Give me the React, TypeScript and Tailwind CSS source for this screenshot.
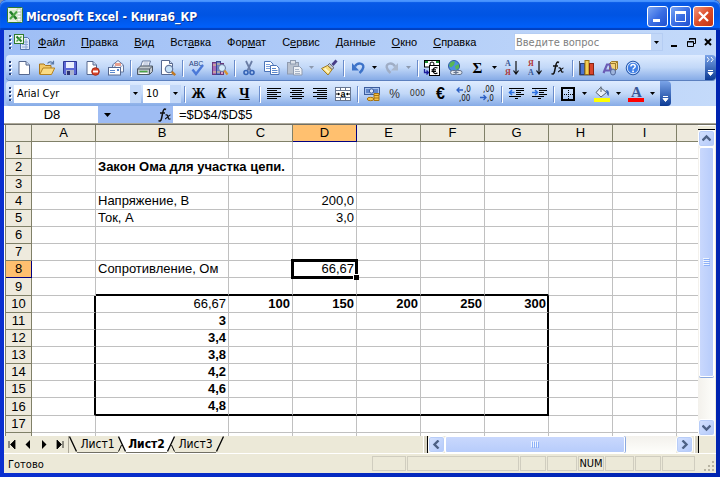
import { useState } from 'react';
import type { ReactNode } from 'react';
import clsx from 'clsx';

/* ---------- data ---------- */

interface CellData {
  text: string;
  bold?: boolean;
  align?: 'left' | 'right';
  span?: number;
}

const COLUMNS = ['A', 'B', 'C', 'D', 'E', 'F', 'G', 'H', 'I', 'J'];
const ROWS = Array.from({ length: 18 }, (_, i) => i + 1);

const CELLS: Record<string, CellData> = {
  B2: { text: 'Закон Ома для участка цепи.', bold: true, span: 2 },
  B4: { text: 'Напряжение, В' },
  D4: { text: '200,0', align: 'right' },
  B5: { text: 'Ток, А' },
  D5: { text: '3,0', align: 'right' },
  B8: { text: 'Сопротивление, Ом' },
  D8: { text: '66,67', align: 'right' },
  B10: { text: '66,67', align: 'right' },
  C10: { text: '100', bold: true, align: 'right' },
  D10: { text: '150', bold: true, align: 'right' },
  E10: { text: '200', bold: true, align: 'right' },
  F10: { text: '250', bold: true, align: 'right' },
  G10: { text: '300', bold: true, align: 'right' },
  B11: { text: '3', bold: true, align: 'right' },
  B12: { text: '3,4', bold: true, align: 'right' },
  B13: { text: '3,8', bold: true, align: 'right' },
  B14: { text: '4,2', bold: true, align: 'right' },
  B15: { text: '4,6', bold: true, align: 'right' },
  B16: { text: '4,8', bold: true, align: 'right' },
};

// [before, accelerator, after]
const MENU: [string, string, string][] = [
  ['', 'Ф', 'айл'],
  ['', 'П', 'равка'],
  ['', 'В', 'ид'],
  ['Вст', 'а', 'вка'],
  ['Фор', 'м', 'ат'],
  ['С', 'е', 'рвис'],
  ['', 'Д', 'анные'],
  ['', 'О', 'кно'],
  ['', 'С', 'правка'],
];

/* ---------- icons ---------- */

function Icon({ children }: { children: ReactNode }) {
  return (
    <svg width="16" height="16" viewBox="0 0 16 16" fill="none" className="overflow-visible" aria-hidden="true">
      {children}
    </svg>
  );
}

const ExcelIcon = () => (
  <Icon>
    <rect x="0.5" y="0.5" width="15" height="15" rx="1" fill="#e9f1e4" stroke="#2f7a2f" />
    <path d="M10 2h4v12h-4z" fill="#fff" stroke="#8fb08a" strokeWidth="0.6" />
    <path d="M10 5h4M10 8h4M10 11h4" stroke="#8fb08a" strokeWidth="0.8" />
    <rect x="2" y="3" width="9" height="10" fill="#d5ead0" />
    <path d="M3 4.5l6.5 7.5" stroke="#1f7a28" strokeWidth="2.6" />
    <path d="M10 4.5L3 12" stroke="#4aa544" strokeWidth="2" />
  </Icon>
);

const BookIcon = () => (
  <Icon>
    <path d="M6.5 3.5h7l2 2v10h-9z" fill="#dfe9fb" stroke="#5475ad" />
    <path d="M8 8h6M8 10.5h6M8 13h6M12 5v10" stroke="#8aa5d3" />
    <rect x="0.5" y="0.5" width="9" height="9" fill="#eef6ea" stroke="#2f7a2f" />
    <path d="M2.5 2.5l5 5" stroke="#1f7a28" strokeWidth="2" />
    <path d="M7.5 2.5l-5 5" stroke="#4aa544" strokeWidth="1.5" />
  </Icon>
);

const NewIcon = () => (
  <Icon>
    <path d="M3 1.5h7l3.5 3.5v9.5H3z" fill="#fff" stroke="#56688f" />
    <path d="M10 1.5V5h3.5" fill="#c8d6ee" stroke="#56688f" />
  </Icon>
);

const OpenIcon = () => (
  <Icon>
    <path d="M0.5 14V4h4.5l1.5 1.5H12V8" fill="#f3c968" stroke="#a8751c" />
    <path d="M0.8 14.5L4 8h11.7l-3.2 6.5z" fill="#fbdc85" stroke="#b5821f" />
    <path d="M8.5 3.5c1.5-2 4-2.300 5.500-.3M14.5 0.800v3h-3" stroke="#5b7aa8" strokeWidth="1.2" />
  </Icon>
);

const SaveIcon = () => (
  <Icon>
    <path d="M1.5 1.5h13v13h-12l-1-1z" fill="#5b68d6" stroke="#2d3795" />
    <rect x="4" y="2" width="8" height="6" fill="#e9eefc" />
    <rect x="4" y="10" width="8" height="5" fill="#a9b3cf" />
    <rect x="5" y="11" width="3" height="4" fill="#2b3270" />
  </Icon>
);

const PermissionIcon = () => (
  <Icon>
    <path d="M2 1.5h6l3.5 3.5v9.5H2z" fill="#fff" stroke="#56688f" />
    <path d="M8 1.5V5h3.5" fill="#c8d6ee" stroke="#56688f" />
    <circle cx="10.5" cy="11.5" r="3.8" fill="#d9452b" stroke="#a52a15" />
    <rect x="8" y="10.5" width="5" height="2" fill="#fff" />
  </Icon>
);

const MailIcon = () => (
  <Icon>
    <path d="M4.5 5L10 0.5 15.5 5v7h-11z" fill="#f6f8fd" stroke="#65789f" />
    <path d="M4.5 5l5.5 3.5L15.5 5" stroke="#9aaace" />
    <rect x="7" y="3" width="6" height="3" fill="#e9a08d" />
    <rect x="0.5" y="7.5" width="12" height="7.5" fill="#fff" stroke="#56688f" />
    <path d="M2 10.5h5M2 12.5h5" stroke="#5a87cc" />
    <rect x="9" y="9" width="2" height="2" fill="#5a87cc" />
  </Icon>
);

const PrintIcon = () => (
  <Icon>
    <path d="M5.5 1h8l-2 6h-8z" fill="#fff" stroke="#65789f" />
    <path d="M6.5 3h5M6 5h5" stroke="#9aaace" />
    <path d="M0.5 9l3-3h12v5.5l-3 3H0.5z" fill="#c3c9cf" stroke="#4d5865" />
    <path d="M0.5 9h12l3-3M12.5 9v5" stroke="#4d5865" />
    <path d="M2.5 11.5h8" stroke="#4aa544" strokeWidth="1.5" />
    <path d="M2.5 13.5h8" stroke="#fff" />
  </Icon>
);

const PreviewIcon = () => (
  <Icon>
    <path d="M1.5 0.5h8L12.5 3.5v11h-11z" fill="#fff" stroke="#56688f" />
    <path d="M9.5 0.5v3h3" fill="#c8d6ee" stroke="#56688f" />
    <circle cx="9" cy="9" r="3.7" fill="#c8e3f8" stroke="#65789f" strokeWidth="1.2" />
    <path d="M11.8 11.8l3.4 3.4" stroke="#c07822" strokeWidth="2.4" />
  </Icon>
);

const SpellingIcon = () => (
  <Icon>
    <text x="0" y="6" fontSize="7" fontFamily="Liberation Sans, sans-serif" fill="#27407c">ABC</text>
    <path d="M3.5 9.5l3.5 4.5L14 5" stroke="#4b79d8" strokeWidth="2.4" />
  </Icon>
);

const ResearchIcon = () => (
  <Icon>
    <rect x="0.5" y="2.5" width="4" height="12" fill="#a56bb8" stroke="#69397c" />
    <rect x="4.5" y="1.5" width="4" height="13" fill="#6d7fce" stroke="#37488f" />
    <path d="M1 5h3M1 12h3M5 4h3M5 12h3" stroke="#e7d08a" />
    <rect x="8.5" y="3.5" width="3" height="11" fill="#d5a1c9" stroke="#69397c" />
    <circle cx="10" cy="8" r="3.5" fill="#d3eafa" stroke="#65789f" />
    <path d="M12.5 10.5l3 4" stroke="#d8922e" strokeWidth="2.2" />
  </Icon>
);

const CutIcon = () => (
  <Icon>
    <path d="M5 1l4.5 9.5M11 1L6.5 10.5" stroke="#6a7da5" strokeWidth="1.8" />
    <circle cx="5" cy="12.5" r="2" stroke="#3563b5" strokeWidth="1.6" />
    <circle cx="11" cy="12.5" r="2" stroke="#3563b5" strokeWidth="1.6" />
  </Icon>
);

const CopyIcon = () => (
  <Icon>
    <path d="M0.5 1.5h6l2.5 2.5v7.5H0.5z" fill="#fff" stroke="#4b74b8" />
    <path d="M2 4.5h4M2 6.5h4M2 8.5h4" stroke="#7ba0dc" />
    <path d="M6.5 5.5h6l2.5 2.5v6.5H6.5z" fill="#fff" stroke="#4b74b8" />
    <path d="M8 8.5h4M8 10.5h5.5M8 12.5h5.5" stroke="#5a87cc" />
  </Icon>
);

const PasteIcon = () => (
  <Icon>
    <rect x="0.5" y="2.5" width="11" height="11.5" fill="#b9c1ce" stroke="#8f9bb0" />
    <rect x="3.5" y="0.5" width="5" height="3.5" fill="#dce1e9" stroke="#8f9bb0" />
    <path d="M6.5 6.5h6l2.5 2.5v6H6.5z" fill="#eef1f6" stroke="#8f9bb0" />
    <path d="M8 9.5h4M8 11.5h5M8 13.5h5" stroke="#a9b4c6" />
  </Icon>
);

const PainterIcon = () => (
  <Icon>
    <path d="M15.5 0.5L11.5 5" stroke="#473d86" strokeWidth="2.8" />
    <path d="M8.5 3.5l4.5 4.2-2 1.8-4.5-4z" fill="#c9ccd2" stroke="#65666e" />
    <path d="M6.5 5.5l4.5 4.2L7 15 0.5 8.5z" fill="#f6dc7c" stroke="#a07c26" />
    <path d="M3.5 8.5l4.5 4" stroke="#fff6c8" strokeWidth="1.8" />
  </Icon>
);

function UndoIcon({ muted, flip }: { muted?: boolean; flip?: boolean }) {
  return (
    <Icon>
      <g transform={flip ? 'translate(16 0) scale(-1 1)' : undefined}>
        <path
          d="M5 6.5c2.5-4.5 9-3.5 8.3.8-.3 2-1.8 4-3.8 5.7"
          stroke={muted ? '#9fadc5' : '#3d73c9'}
          strokeWidth="2.4"
        />
        <path d="M2 3v7.5h7z" fill={muted ? '#aab7cc' : '#3d73c9'} />
      </g>
    </Icon>
  );
}

const EuroConvertIcon = () => (
  <Icon>
    <rect x="0.5" y="0.5" width="15" height="6.5" fill="#fff" stroke="#000" />
    <path d="M1 1h3v2H1zM12 1h3v2h-3z" fill="#168a2c" />
    <circle cx="8" cy="4" r="2" stroke="#000" />
    <rect x="5.5" y="5.5" width="10" height="10" fill="#fff" stroke="#000" />
    <path d="M13.5 8c-2.5-1.3-4.5.2-4.5 2.6s2 3.7 4.5 2.4M7.5 9.8h4.5M7.5 11.5h4.5" stroke="#000" strokeWidth="1.2" />
    <path d="M0.5 9v3.5H4M2.5 10.5l2 2-2 2" stroke="#1c1c9c" strokeWidth="1.3" />
  </Icon>
);

const HyperlinkIcon = () => (
  <Icon>
    <circle cx="7" cy="6" r="5.5" fill="#4d8de0" stroke="#2c5ba5" />
    <path d="M3 3c2-2 4-2 5-1L7 5 4 7.5 2 6zM8 6l4-2v4l-3 2z" fill="#58b655" />
    <rect x="3.5" y="10.5" width="6.5" height="4" rx="2" fill="#e3e8ef" stroke="#66758f" />
    <rect x="8.5" y="10.5" width="6.5" height="4" rx="2" fill="#e3e8ef" stroke="#66758f" />
    <path d="M6.5 12.5h5" stroke="#66758f" strokeWidth="1.2" />
  </Icon>
);

function SortIcon({ top, bottom, topColor, bottomColor }: { top: string; bottom: string; topColor: string; bottomColor: string }) {
  return (
    <Icon>
      <g fontSize="8" fontWeight="bold" fontFamily="Liberation Serif, serif">
        <text x="1" y="6" fill={topColor}>{top}</text>
        <text x="1" y="15" fill={bottomColor}>{bottom}</text>
      </g>
      <path d="M12 1v12M9.5 10.5L12 14l2.5-3.5" stroke="#111" strokeWidth="1.2" />
    </Icon>
  );
}

const FunctionIcon = () => (
  <Icon>
    <path d="M9 2.5c-2-1.2-2.7.5-3.2 3L4.5 11.5c-.5 2.5-1.5 3-3 2.2M3 6h5" stroke="#111" strokeWidth="1.5" />
    <path d="M8.5 8c1.5-.5 2 0 2.5 2s1 2.5 2.5 1.8M13.5 8c-1.5-.3-4 4-5.5 3.800" stroke="#111" strokeWidth="1.2" />
  </Icon>
);

const ChartIcon = () => (
  <Icon>
    <path d="M0.5 1v14h15" stroke="#555" />
    <rect x="1.5" y="3.5" width="4" height="11" fill="#4b74d0" stroke="#27407c" />
    <rect x="6" y="0.5" width="4" height="14" fill="#f5cf55" stroke="#9c7413" />
    <rect x="10.5" y="3.5" width="4" height="11" fill="#d9452b" stroke="#8a2414" />
  </Icon>
);

const DrawingIcon = () => (
  <Icon>
    <path d="M7.5 3.5l2-2h6v7l-2 2h-6z" fill="#f2d27a" stroke="#9c7a2b" />
    <path d="M7.5 3.5h6v7M13.5 3.5l2-2" stroke="#9c7a2b" />
    <path d="M1.5 13L5 4.5h2.5L10 13M3 10.5h6" stroke="#6a5bb5" strokeWidth="2.2" />
    <ellipse cx="11" cy="12" rx="2.5" ry="3" fill="#9fb5dc" stroke="#52699c" />
  </Icon>
);

const HelpIcon = () => (
  <Icon>
    <circle cx="8" cy="8" r="6.8" fill="#3f7fe6" stroke="#2858a8" />
    <circle cx="8" cy="8" r="5.7" stroke="#d6e5fb" strokeWidth="1" />
    <path d="M5.9 6.5c0-2.6 4.3-2.6 4.3 0 0 1.5-2.2 1.5-2.2 3" stroke="#fff" strokeWidth="1.5" />
    <rect x="7.2" y="10.5" width="1.7" height="1.7" fill="#fff" />
  </Icon>
);

const AlignIcon = ({ side }: { side: 'left' | 'center' | 'right' }) => (
  <Icon>
    <path
      d={
        side === 'left'
          ? 'M1 2.5h14M1 4.5h10M1 6.5h14M1 8.5h10M1 10.5h14M1 12.5h10'
          : side === 'center'
            ? 'M1 2.5h14M3 4.5h10M1 6.5h14M3 8.5h10M1 10.5h14M3 12.5h10'
            : 'M1 2.5h14M5 4.5h10M1 6.5h14M5 8.5h10M1 10.5h14M5 12.5h10'
      }
      stroke="#000"
    />
  </Icon>
);

const MergeIcon = () => (
  <Icon>
    <rect x="0.5" y="1.5" width="15" height="13" fill="#fff" stroke="#66758f" />
    <path d="M0.5 4.5h15M0.5 11.5h15M5.5 1.5v3M10.5 1.5v3M5.5 11.5v3M10.5 11.5v3" stroke="#66758f" />
    <path d="M1 8h3.5M15 8h-3.5" stroke="#000" />
    <path d="M3 6.5L5 8 3 9.5zM13 6.5L11 8l2 1.5z" fill="#000" />
    <text x="5.5" y="10.5" fontSize="9" fontWeight="bold" fontFamily="Liberation Sans, sans-serif" fill="#000">a</text>
  </Icon>
);

const CurrencyIcon = () => (
  <Icon>
    <rect x="0.5" y="1.5" width="15" height="7" fill="#a9c3ee" stroke="#3b5c9c" />
    <rect x="2" y="3" width="12" height="4" fill="#6288cb" />
    <circle cx="7.5" cy="5" r="2.2" fill="#d8e5fa" stroke="#3b5c9c" />
    <path d="M10 7.5h5v7h-5z" fill="#f6c54b" stroke="#a87410" />
    <path d="M10 9.5h5M10 12h5" stroke="#a87410" />
    <ellipse cx="6.5" cy="13" rx="3.3" ry="1.7" fill="#f6c54b" stroke="#a87410" />
  </Icon>
);

function DecimalIcon({ add }: { add?: boolean }) {
  return (
    <Icon>
      <g fontSize="8" fontFamily="DejaVu Sans Condensed, sans-serif" fill="#111">
        <text x={add ? 8 : 4} y="6">{add ? ',0' : ',00'}</text>
        <text x={add ? 3 : 8} y="15">{add ? ',00' : ',0'}</text>
      </g>
      {add ? (
        <path d="M7 4H1M3.5 1.5L1 4l2.5 2.5" stroke="#2b5fc4" strokeWidth="1.3" />
      ) : (
        <path d="M1 11.5h6M4.5 9L7 11.5 4.5 14" stroke="#2b5fc4" strokeWidth="1.3" />
      )}
    </Icon>
  );
}

function IndentIcon({ increase }: { increase?: boolean }) {
  return (
    <Icon>
      <path d="M1 2.5h15M8 4.5h8M8 6.5h5M8 8.5h8M1 10.5h12M7 12.5h3" stroke="#000" />
      <path
        d={increase ? 'M1 6.5h5M4 4l2.5 2.5L4 9' : 'M6.5 6.5h-5M4 4L1.5 6.5 4 9'}
        stroke="#2b6fe0"
        strokeWidth="1.5"
      />
    </Icon>
  );
}

const BorderIcon = () => (
  <Icon>
    <rect x="2" y="2" width="12" height="12" stroke="#000" strokeWidth="2" />
    <path d="M8.5 4v9M4 8.5h9" stroke="#000" strokeDasharray="1 1" />
  </Icon>
);

const FillIcon = () => (
  <Icon>
    <path d="M6.5 1.5l6 5-5.5 4.5-5-4.5z" fill="#e8eef8" stroke="#55606f" />
    <path d="M7 6V0.5" stroke="#55606f" />
    <path d="M12 4c3 0 3.5 3 2.5 6-1.5-1-1.5-2.5-2-3.5z" fill="#3f66ad" />
    <rect x="0" y="12" width="16" height="4" fill="#ff0" />
  </Icon>
);

const FontColorIcon = () => (
  <Icon>
    <text x="3" y="11" fontSize="15" fontWeight="bold" fontFamily="Liberation Serif, serif" fill="#3a5795">A</text>
    <rect x="0" y="12" width="16" height="4" fill="#f00" />
  </Icon>
);

const Caret = ({ muted }: { muted?: boolean }) => (
  <svg width="5" height="3" viewBox="0 0 5 3" aria-hidden="true">
    <path d="M0 0h5L2.5 3z" fill={muted ? '#8c99ae' : '#000'} />
  </svg>
);

/* ---------- toolbar parts ---------- */

function ToolButton({ label, children }: { label: string; children: ReactNode }) {
  return (
    <button type="button" aria-label={label} className="flex h-6 w-[23px] shrink-0 items-center justify-center">
      {children}
    </button>
  );
}

function CaretButton({ label, muted }: { label: string; muted?: boolean }) {
  return (
    <button type="button" aria-label={label} className="flex h-6 w-[11px] shrink-0 items-center justify-center">
      <Caret muted={muted} />
    </button>
  );
}

const Separator = () => <span className="ml-[3px] mr-[2px] h-4 w-px shrink-0 bg-[#6a8ccb] shadow-[1px_1px_0_#fff]" />;

const Grip = () => (
  <svg width="3" height="14" viewBox="0 0 3 14" className="shrink-0" aria-hidden="true">
    <path d="M1 1h2v2H1zM1 5h2v2H1zM1 9h2v2H1zM1 13h2v1H1z" fill="#fff" />
    <path d="M0 0h2v2H0zM0 4h2v2H0zM0 8h2v2H0zM0 12h2v2H0z" fill="#27417c" />
  </svg>
);

function BarEnd({ chevrons }: { chevrons?: boolean }) {
  return (
    <button
      type="button"
      aria-label="Параметры панелей инструментов"
      className="flex h-full w-[11px] shrink-0 flex-col items-center justify-end gap-2 rounded-r bg-linear-to-b from-[#7ba4e8] to-[#0b3a94] pb-1"
    >
      {chevrons && (
        <svg width="7" height="5" viewBox="0 0 7 5" aria-hidden="true">
          <path d="M0 0l2 2.5L0 5M4 0l2 2.5L4 5" stroke="#fff" fill="none" />
        </svg>
      )}
      <svg width="7" height="6" viewBox="0 0 7 6" aria-hidden="true">
        <path d="M1 0.5h5M1 2.5h5L3.5 5.5z" stroke="#fff" fill="#fff" />
      </svg>
    </button>
  );
}

interface ComboProps {
  id: string;
  label: string;
  value: string;
  width: string;
}

function Combo({ id, label, value, width }: ComboProps) {
  return (
    <div className={clsx('relative h-[18px] shrink-0 bg-white', width)}>
      <label htmlFor={id} className="sr-only">{label}</label>
      <select
        id={id}
        defaultValue={value}
        className="block h-[18px] w-full appearance-none bg-transparent pl-[3px] leading-[18px] outline-none"
      >
        <option>{value}</option>
      </select>
      <span className="pointer-events-none absolute inset-y-0 right-0 flex w-[11px] items-center justify-center bg-[#c3d8f8]">
        <Caret />
      </span>
    </div>
  );
}

/* ---------- window parts ---------- */

function CaptionButton({ label, close, children }: { label: string; close?: boolean; children: ReactNode }) {
  return (
    <button
      type="button"
      aria-label={label}
      className={clsx(
        'flex size-[21px] items-center justify-center rounded-[3px] border border-white bg-linear-to-br',
        close ? 'from-[#f0937a] via-[#dd4c28] to-[#c23413]' : 'from-[#7ba5f3] via-[#3c6fe4] to-[#1f4fd0]',
      )}
    >
      <svg width="13" height="13" viewBox="0 0 13 13" fill="none" stroke="#fff" aria-hidden="true">
        {children}
      </svg>
    </button>
  );
}

function TitleBar() {
  return (
    <header className="flex h-[30px] shrink-0 items-center rounded-t-md bg-linear-to-b from-[#0a5be8] via-[#0054e3] to-[#0062ff] pl-[7px] pr-[6px] shadow-[inset_0_2px_1px_#4a95ff,inset_0_-2px_1px_#0040c0]">
      <ExcelIcon />
      <h1 className="ml-[3px] flex-1 pt-[3px] font-['DejaVu_Sans_Condensed',sans-serif] text-[12px] font-bold text-white [text-shadow:1px_1px_0_#0a2f8c]">
        Microsoft Excel - Книга6_КР
      </h1>
      <div className="flex gap-[2px] pt-[2px]">
        <CaptionButton label="Свернуть">
          <path d="M2 10.5h7" strokeWidth="3" />
        </CaptionButton>
        <CaptionButton label="Развернуть">
          <path d="M1 2.5h11" strokeWidth="3" />
          <path d="M1.5 3v8.5h10V3" />
        </CaptionButton>
        <CaptionButton label="Закрыть" close>
          <path d="M2 2l9 9M11 2l-9 9" strokeWidth="2.2" />
        </CaptionButton>
      </div>
    </header>
  );
}

function MenuBar() {
  return (
    <nav className="flex h-6 shrink-0 items-center pl-[5px]">
      <Grip />
      <span className="ml-[2px]">
        <BookIcon />
      </span>
      <div className="flex font-['Liberation_Sans',Arial,sans-serif]">
        {MENU.map(([before, key, after]) => (
          <button key={before + key + after} type="button" className="px-2 leading-4">
            {before}
            <span className="underline">{key}</span>
            {after}
          </button>
        ))}
      </div>
      <div className="ml-auto flex h-[18px] w-[149px] items-center border border-[#b5cdf3] bg-white">
        <input
          aria-label="Введите вопрос"
          placeholder="Введите вопрос"
          className="h-full min-w-0 flex-1 pl-px outline-none placeholder:text-[#808080]"
        />
        <button type="button" aria-label="Список вопросов" className="flex h-full w-[11px] items-center justify-center bg-[#c3d8f8]">
          <Caret />
        </button>
      </div>
      <div className="ml-[2px] flex">
        {[
          ['Свернуть окно', 'M3 10h6', 2],
          ['Восстановить окно', 'M4.5 4V2.5h6v5H9M2.5 5.5h6v5h-6zM4 3h7M2 6h7', 1],
          ['Закрыть окно', 'M3 3l6 6M9 3L3 9', 2],
        ].map(([label, d, w]) => (
          <button key={label} type="button" aria-label={String(label)} className="flex h-4 w-[17px] items-center justify-center">
            <svg width="12" height="12" viewBox="0 0 12 12" fill="none" stroke="#000" strokeWidth={w} aria-hidden="true">
              <path d={String(d)} />
            </svg>
          </button>
        ))}
      </div>
    </nav>
  );
}

function StandardBar() {
  return (
    <div className="ml-[2px] flex h-[25px] shrink-0 items-center rounded bg-linear-to-b from-[#dfecff] via-[#c2d8f8] to-[#86abe6] pl-[3px] shadow-[0_1px_0_#5c80bf]">
      <Grip />
      <div className="flex flex-1 items-center">
        <ToolButton label="Создать"><NewIcon /></ToolButton>
        <ToolButton label="Открыть"><OpenIcon /></ToolButton>
        <ToolButton label="Сохранить"><SaveIcon /></ToolButton>
        <ToolButton label="Разрешения"><PermissionIcon /></ToolButton>
        <ToolButton label="Сообщение"><MailIcon /></ToolButton>
        <Separator />
        <ToolButton label="Печать"><PrintIcon /></ToolButton>
        <ToolButton label="Предварительный просмотр"><PreviewIcon /></ToolButton>
        <Separator />
        <ToolButton label="Орфография"><SpellingIcon /></ToolButton>
        <ToolButton label="Справочные материалы"><ResearchIcon /></ToolButton>
        <Separator />
        <ToolButton label="Вырезать"><CutIcon /></ToolButton>
        <ToolButton label="Копировать"><CopyIcon /></ToolButton>
        <ToolButton label="Вставить"><PasteIcon /></ToolButton>
        <CaretButton label="Варианты вставки" muted />
        <ToolButton label="Формат по образцу"><PainterIcon /></ToolButton>
        <Separator />
        <ToolButton label="Отменить"><UndoIcon /></ToolButton>
        <CaretButton label="Список отмены" />
        <ToolButton label="Вернуть"><UndoIcon muted flip /></ToolButton>
        <CaretButton label="Список возврата" muted />
        <Separator />
        <ToolButton label="Пересчет в евро"><EuroConvertIcon /></ToolButton>
        <ToolButton label="Гиперссылка"><HyperlinkIcon /></ToolButton>
        <ToolButton label="Автосумма">
          <span className="font-['Liberation_Serif',serif] text-[15px] font-bold leading-4">Σ</span>
        </ToolButton>
        <CaretButton label="Другие функции" />
        <ToolButton label="По возрастанию">
          <SortIcon top="А" bottom="Я" topColor="#3a5795" bottomColor="#b03a3a" />
        </ToolButton>
        <ToolButton label="По убыванию">
          <SortIcon top="Я" bottom="А" topColor="#b03a3a" bottomColor="#3a5795" />
        </ToolButton>
        <ToolButton label="Вставка функции"><FunctionIcon /></ToolButton>
        <Separator />
        <ToolButton label="Мастер диаграмм"><ChartIcon /></ToolButton>
        <ToolButton label="Рисование"><DrawingIcon /></ToolButton>
        <ToolButton label="Справка"><HelpIcon /></ToolButton>
      </div>
      <BarEnd chevrons />
    </div>
  );
}

function FormattingBar() {
  return (
    <div className="ml-[2px] mt-px flex h-[25px] w-max shrink-0 items-center rounded bg-linear-to-b from-[#dfecff] via-[#c2d8f8] to-[#86abe6] pl-[3px]">
      <Grip />
      <div className="ml-[2px] flex gap-[2px]">
        <Combo id="font-name" label="Шрифт" value="Arial Cyr" width="w-[127px]" />
        <Combo id="font-size" label="Размер" value="10" width="w-[38px]" />
      </div>
      <Separator />
      <div className="flex font-['Liberation_Serif',serif] text-[14px] font-bold">
        <ToolButton label="Полужирный">Ж</ToolButton>
        <ToolButton label="Курсив"><span className="italic">К</span></ToolButton>
        <ToolButton label="Подчеркнутый"><span className="underline">Ч</span></ToolButton>
      </div>
      <Separator />
      <ToolButton label="По левому краю"><AlignIcon side="left" /></ToolButton>
      <ToolButton label="По центру"><AlignIcon side="center" /></ToolButton>
      <ToolButton label="По правому краю"><AlignIcon side="right" /></ToolButton>
      <ToolButton label="Объединить и поместить в центре"><MergeIcon /></ToolButton>
      <Separator />
      <div className="flex font-['Liberation_Sans',Arial,sans-serif] text-[#333]">
        <ToolButton label="Денежный формат"><CurrencyIcon /></ToolButton>
        <ToolButton label="Процентный формат"><span className="text-[12px]">%</span></ToolButton>
        <ToolButton label="Формат с разделителями"><span className="font-['DejaVu_Sans_Condensed',sans-serif] text-[9px]">000</span></ToolButton>
        <ToolButton label="Евро"><span className="text-[16px] font-bold leading-4 text-black">€</span></ToolButton>
      </div>
      <ToolButton label="Увеличить разрядность"><DecimalIcon add /></ToolButton>
      <ToolButton label="Уменьшить разрядность"><DecimalIcon /></ToolButton>
      <Separator />
      <ToolButton label="Уменьшить отступ"><IndentIcon /></ToolButton>
      <ToolButton label="Увеличить отступ"><IndentIcon increase /></ToolButton>
      <Separator />
      <ToolButton label="Границы"><BorderIcon /></ToolButton>
      <CaretButton label="Виды границ" />
      <ToolButton label="Цвет заливки"><FillIcon /></ToolButton>
      <CaretButton label="Выбор заливки" />
      <ToolButton label="Цвет шрифта"><FontColorIcon /></ToolButton>
      <CaretButton label="Выбор цвета шрифта" />
      <span className="w-[2px]" />
      <BarEnd />
    </div>
  );
}

function FormulaBar() {
  return (
    <div className="flex h-[18px] shrink-0 border-b border-[#aca899] bg-white pl-[2px] font-['Liberation_Sans',Arial,sans-serif] text-[13px]">
      <input aria-label="Имя ячейки" defaultValue="D8" className="w-[92px] text-center outline-none" />
      <div className="flex w-[75px] items-center justify-between bg-[#9ebcf3] pl-[6px]">
        <button type="button" aria-label="Список имен" className="flex h-4 items-center">
          <svg width="7" height="4" viewBox="0 0 7 4" aria-hidden="true">
            <path d="M0 0h7L3.5 4z" fill="#000" />
          </svg>
        </button>
        <button type="button" aria-label="Вставить функцию" className="flex h-4 items-center">
          <FunctionIcon />
        </button>
      </div>
      <input aria-label="Строка формул" defaultValue="=$D$4/$D$5" className="min-w-0 flex-1 pl-[6px] outline-none" />
    </div>
  );
}

/* ---------- sheet ---------- */

function Sheet() {
  const inTable = (col: string, row: number) => col >= 'B' && col <= 'G' && row >= 10 && row <= 16;

  return (
    <table className="w-[735px] table-fixed border-separate border-spacing-0 bg-white font-['Liberation_Sans',Arial,sans-serif] text-[13px] leading-4">
      <colgroup>
        <col className="w-[26px]" />
        {COLUMNS.map((col) => (
          <col key={col} className={col === 'B' ? 'w-[133px]' : 'w-[64px]'} />
        ))}
      </colgroup>
      <thead>
        <tr className="h-[17px]">
          <td className="border-b border-r border-[#808068] bg-[#eeeadd] p-0" />
          {COLUMNS.map((col) => (
            <th
              key={col}
              scope="col"
              className={clsx(
                'border-b border-r p-0 font-normal',
                col === 'D' ? 'border-[#000080] bg-[#ffc06f]' : 'border-[#808068] bg-[#eeeadd]',
              )}
            >
              {col}
            </th>
          ))}
        </tr>
      </thead>
      <tbody>
        {ROWS.map((row) => (
          <tr key={row} className={row === 9 || row === 16 ? 'h-[18px]' : 'h-[17px]'}>
            <th
              scope="row"
              className={clsx(
                'border-b border-r p-0 font-normal',
                row === 8 ? 'border-[#000080] bg-[#ffc06f]' : 'border-[#808068] bg-[#eeeadd]',
              )}
            >
              {row}
            </th>
            {COLUMNS.map((col, i) => {
              const cell = CELLS[`${col}${row}`];
              const covered = i > 0 && (CELLS[`${COLUMNS[i - 1]}${row}`]?.span ?? 1) > 1;
              if (covered) return null;
              const active = col === 'D' && row === 8;
              const rightEdge = row >= 10 && row <= 16 && (col === 'A' || col === 'G');
              const bottomEdge = col >= 'B' && col <= 'G' && (row === 9 || row === 16);
              return (
                <td
                  key={col}
                  colSpan={cell?.span}
                  className={clsx(
                    'whitespace-nowrap py-0 pl-[2px]',
                    active && 'relative',
                    rightEdge ? 'border-r-2 border-r-black' : 'border-r border-r-[#c0c0c0]',
                    bottomEdge ? 'border-b-2 border-b-black' : 'border-b border-b-[#c0c0c0]',
                    cell?.align === 'right' ? 'text-right' : 'text-left',
                    inTable(col, row) && col === 'G' ? 'pr-px' : 'pr-[2px]',
                    cell?.bold && 'font-bold',
                  )}
                >
                  {cell?.text}
                  {active && (
                    <span className="pointer-events-none absolute -inset-[2px] border-[3px] border-black">
                      <span className="absolute -bottom-[4px] -right-[4px] size-[6px] border-l border-t border-white bg-black" />
                    </span>
                  )}
                </td>
              );
            })}
          </tr>
        ))}
      </tbody>
    </table>
  );
}

function ScrollButton({ label, d }: { label: string; d: string }) {
  return (
    <button
      type="button"
      aria-label={label}
      className="flex size-[17px] shrink-0 items-center justify-center rounded-[3px] border border-white bg-linear-to-br from-[#d5e2fe] to-[#b3c9fa] shadow-[inset_0_0_0_1px_#b8cdf8]"
    >
      <svg width="9" height="9" viewBox="0 0 9 9" fill="none" stroke="#4d6185" strokeWidth="2.4" aria-hidden="true">
        <path d={d} />
      </svg>
    </button>
  );
}

function VerticalScroll() {
  return (
    <div className="flex w-[18px] shrink-0 flex-col items-center border-r border-[#eeeadd] bg-linear-to-r from-[#f3f1ec] to-[#fefefb]">
      <div className="h-[4px] w-full shrink-0 border-t border-white bg-[#ece9d8]" />
      <div className="h-px w-full shrink-0 bg-black" />
      <ScrollButton label="Вверх" d="M0.5 6.5l4-4 4 4" />
      <div className="flex min-h-0 w-[15px] flex-[229] flex-col items-center justify-center gap-px rounded-[2px] border border-white bg-linear-to-r from-[#c9d8fd] to-[#b7ccfb] shadow-[0_1px_0_#8ba9e0]">
        <svg width="7" height="8" viewBox="0 0 7 8" aria-hidden="true">
          <path d="M0 0.5h6M0 2.5h6M0 4.5h6M0 6.5h6" stroke="#eef4fe" />
          <path d="M1 1.5h6M1 3.5h6M1 5.5h6M1 7.5h6" stroke="#8cb0f8" />
        </svg>
      </div>
      <div className="flex-[42]" />
      <ScrollButton label="Вниз" d="M0.5 2.5l4 4 4-4" />
    </div>
  );
}

function HorizontalScroll() {
  return (
    <div className="ml-auto flex w-[276px] shrink-0">
      <div className="w-[4px] border-l border-white bg-[#d8d4c4]" />
      <div className="w-px bg-black" />
      <ScrollButton label="Влево" d="M6.5 0.5l-4 4 4 4" />
      <div className="flex flex-1 bg-linear-to-b from-[#f3f1ec] to-[#fefefb]">
        <div className="flex w-[78%] items-center justify-center rounded-[2px] border border-white bg-linear-to-b from-[#c9d8fd] to-[#b7ccfb] shadow-[1px_0_0_#8ba9e0]">
          <svg width="8" height="7" viewBox="0 0 8 7" aria-hidden="true">
            <path d="M0.5 0v6M2.5 0v6M4.5 0v6M6.5 0v6" stroke="#eef4fe" />
            <path d="M1.5 1v6M3.5 1v6M5.5 1v6M7.5 1v6" stroke="#8cb0f8" />
          </svg>
        </div>
      </div>
      <ScrollButton label="Вправо" d="M2.5 0.5l4 4-4 4" />
      <div className="ml-px w-[4px] border-l border-white bg-[#d8d4c4]" />
      <div className="w-px bg-black" />
    </div>
  );
}

// Slanted edge between two tabs; the active tab overlaps its neighbours
function TabEdge({ kind }: { kind: 'first' | 'beforeActive' | 'afterActive' | 'last' }) {
  return (
    <svg width="8" height="17" viewBox="0 0 8 17" fill="none" className="shrink-0" aria-hidden="true">
      {kind === 'beforeActive' && <path d="M0 0h8v16H7z" fill="#fff" />}
      {kind === 'afterActive' && <path d="M0 0h8L1 16H0z" fill="#fff" />}
      {(kind === 'first' || kind === 'beforeActive') && <path d="M0.5 0.5L7.5 15.5" stroke="#000" strokeWidth="1.3" />}
      {kind === 'beforeActive' && <path d="M0.5 15.5L3.5 9" stroke="#000" />}
      {(kind === 'last' || kind === 'afterActive') && <path d="M7.5 0.5L0.5 15.5" stroke="#000" strokeWidth="1.3" />}
      {kind === 'afterActive' && <path d="M7.5 15.5L4.5 9" stroke="#000" />}
    </svg>
  );
}

function SheetTabs() {
  const [active, setActive] = useState('Лист2');
  const edges = ['beforeActive', 'afterActive', 'last'] as const;

  return (
    <div className="flex h-[17px] shrink-0 bg-[#ece9d8] pr-[17px]">
      {[
        ['Первый лист', 'M1 1v7M7 0v9L2.5 4.5z'],
        ['Предыдущий лист', 'M6 0v9L1.5 4.5z'],
        ['Следующий лист', 'M2 0v9l4.5-4.5z'],
        ['Последний лист', 'M1 0v9l4.5-4.5zM7 1v7'],
      ].map(([label, d], i) => (
        <button key={label} type="button" aria-label={label} className="flex w-4 items-center justify-center">
          <svg width="8" height="9" viewBox="0 0 8 9" aria-hidden="true">
            <path d={d} fill="#000" stroke={i === 0 || i === 3 ? '#000' : 'none'} strokeWidth="0.8" />
          </svg>
        </button>
      ))}
      <span className="w-px bg-[#aca899]" />
      <TabEdge kind="first" />
      {['Лист1', 'Лист2', 'Лист3'].map((name, i) => (
        <div key={name} className="flex">
          <button
            type="button"
            onClick={() => setActive(name)}
            className={clsx(
              'w-[41px] whitespace-nowrap border-b border-[#716f64] text-center text-[12px] leading-4',
              name === active ? 'bg-white font-bold' : 'bg-[#ece9d8]',
            )}
          >
            {name}
          </button>
          <TabEdge kind={edges[i]} />
        </div>
      ))}
      <HorizontalScroll />
    </div>
  );
}

function StatusBar() {
  return (
    <footer className="flex h-5 shrink-0 items-center border-t border-white bg-[#ece9d8] pl-1">
      <span className="flex-1 pt-[2px] leading-4">Готово</span>
      <div className="flex h-[15px] gap-px leading-[14px] *:border *:border-[#d0cdbf]">
        <span className="w-[34px]" />
        <span className="w-[112px]" />
        <span className="w-[26px]" />
        <span className="w-[30px]" />
        <span className="w-[26px] text-center">NUM</span>
        <span className="w-[29px]" />
        <span className="w-[26px]" />
        <span className="w-[33px]" />
      </div>
      <svg width="12" height="12" viewBox="0 0 12 12" className="ml-[9px] self-end" aria-hidden="true">
        <path d="M8 0h2v2H8zM4 4h2v2H4zM8 4h2v2H8zM0 8h2v2H0zM4 8h2v2H4zM8 8h2v2H8z" fill="#b8b4a2" />
      </svg>
    </footer>
  );
}

export default function App() {
  return (
    <div className="h-screen bg-[#7c93b8] font-['DejaVu_Sans_Condensed','Noto_Sans',sans-serif] text-[11px] text-black">
      <div className="flex h-full flex-col overflow-hidden rounded-t-md bg-linear-to-r from-[#0a2fd0] to-[#0024b0]">
        <TitleBar />
        <div className="mx-1 mb-1 flex min-h-0 flex-1 flex-col overflow-hidden">
          <div className="flex shrink-0 flex-col bg-linear-to-r from-[#9ebef5] to-[#c4dafa]">
            <MenuBar />
            <div className="h-px" />
            <StandardBar />
            <FormattingBar />
          </div>
          <FormulaBar />
          <div className="flex min-h-0 flex-1 border-t border-[#716f64] bg-white">
            <div className="ml-px min-w-0 flex-1 overflow-hidden border-l border-[#808068]">
              <Sheet />
            </div>
            <VerticalScroll />
          </div>
          <SheetTabs />
          <StatusBar />
        </div>
      </div>
    </div>
  );
}
